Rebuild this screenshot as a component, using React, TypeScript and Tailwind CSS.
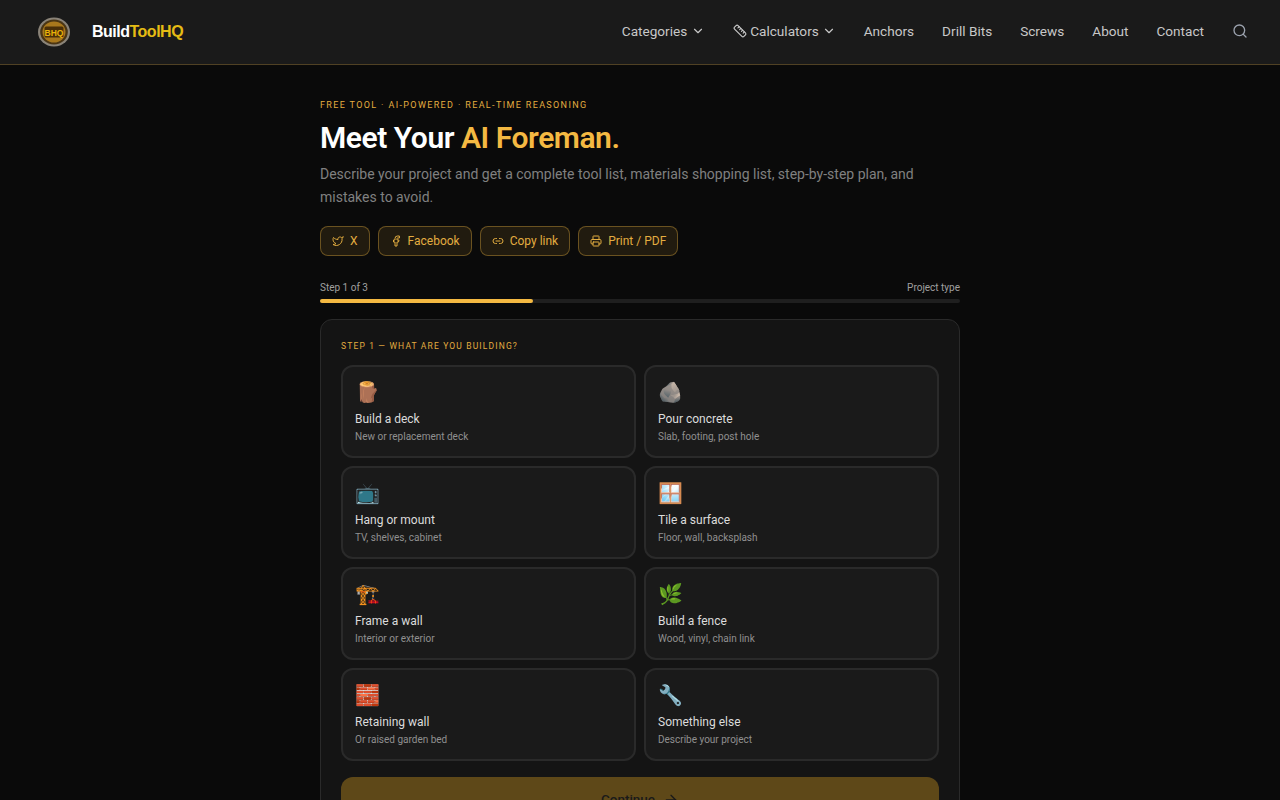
import { ChevronDown, Search, Ruler, Twitter, Facebook, Link2, Printer, ArrowRight } from "lucide-react";

const font = "[font-family:'Roboto',sans-serif]";

const items = [
  ["🪵", "Build a deck", "New or replacement deck"],
  ["🪨", "Pour concrete", "Slab, footing, post hole"],
  ["📺", "Hang or mount", "TV, shelves, cabinet"],
  ["🪟", "Tile a surface", "Floor, wall, backsplash"],
  ["🏗️", "Frame a wall", "Interior or exterior"],
  ["🌿", "Build a fence", "Wood, vinyl, chain link"],
  ["🧱", "Retaining wall", "Or raised garden bed"],
  ["🔧", "Something else", "Describe your project"],
];

function Logo() {
  return (
    <svg width="34" height="30" viewBox="0 0 34 30">
      <ellipse cx="17" cy="15" rx="16" ry="14.5" fill="#8a8378" />
      <ellipse cx="17" cy="15" rx="13.8" ry="12.5" fill="#4a3514" />
      <ellipse cx="17" cy="15" rx="11.5" ry="10.5" fill="#a9781c" />
      <rect x="7.5" y="9.5" width="19" height="11" rx="1.5" fill="#4a2f08" />
      <text x="17" y="18.5" textAnchor="middle" fontSize="8.5" fontWeight="700" fill="#eab308" fontFamily="Liberation Sans">BHQ</text>
    </svg>
  );
}

function Share({ icon, label }: { icon: React.ReactNode; label: string }) {
  return (
    <a className="flex h-[30px] items-center gap-[6px] rounded-lg border border-[#f4b94259] bg-[#f4b9421a] px-[11px] text-xs text-[#e3ad40]">
      {icon}
      {label}
    </a>
  );
}

export default function App() {
  return (
    <div className={`min-h-screen bg-[#0a0a0a] ${font}`}>
      <header className="flex h-[65px] items-center justify-between border-b border-[#f4b94240] bg-[#1a1a1a] pr-[32px] pl-[37px]">
        <div className="flex items-center gap-[21px]">
          <Logo />
          <div className="text-[16px] font-bold tracking-[-0.5px] text-white [font-family:'Liberation_Sans',sans-serif]">
            Build<span className="text-[#e5bc14]">ToolHQ</span>
          </div>
        </div>
        <nav className="-mt-px flex items-center gap-7 text-[13.6px] text-[#c8c8c8]">
          <span className="flex items-center gap-[4px]">Categories <ChevronDown size={14} /></span>
          <span className="flex items-center gap-[3px]"><Ruler size={14} />Calculators <ChevronDown size={14} /></span>
          <span>Anchors</span>
          <span>Drill Bits</span>
          <span>Screws</span>
          <span>About</span>
          <span>Contact</span>
          <Search size={16} className="text-[#9ca3af]" />
        </nav>
      </header>
      <main className="mx-auto w-[640px] pt-[34px]">
        <p className="text-[9px] leading-[12px] tracking-[1.36px] text-[#e3ad40] uppercase">Free tool · AI-powered · Real-time reasoning</p>
        <h1 className="mt-[9px] text-[30px] leading-[36px] font-semibold tracking-[-0.45px] text-white">
          Meet Your <span className="text-[#f4b942]">AI Foreman.</span>
        </h1>
        <p className="mt-[7px] text-sm leading-[23px] text-[#808080]">
          Describe your project and get a complete tool list, materials shopping list, step-by-step plan, and mistakes to avoid.
        </p>
        <div className="mt-[17px] flex gap-2">
          <Share icon={<Twitter size={12} />} label="X" />
          <Share icon={<Facebook size={12} />} label="Facebook" />
          <Share icon={<Link2 size={12} />} label="Copy link" />
          <Share icon={<Printer size={12} />} label="Print / PDF" />
        </div>
        <div className="mt-[26px] flex justify-between text-[10px] leading-[12px] text-[#a0a0a0]">
          <span>Step 1 of 3</span>
          <span>Project type</span>
        </div>
        <div className="mt-[5px] h-1 rounded-full bg-[#1f1f1f]">
          <div className="h-1 w-1/3 rounded-full bg-[#f4b942]" />
        </div>
        <section className="mt-4 rounded-xl border border-[#2a2a2a] bg-[#141414] p-5">
          <h2 className="text-[8.5px] leading-[12px] tracking-[1.15px] text-[#e3ad40] uppercase">Step 1 — What are you building?</h2>
          <div className="mt-[13px] grid grid-cols-2 gap-2">
            {items.map(([e, t, s]) => (
              <button key={t} className="flex h-[93px] flex-col items-start rounded-xl border-2 border-[#2a2a2a] bg-[#1a1a1a] px-3 pt-[11px] text-left">
                <span className="text-xl leading-[28px] [font-family:'Noto_Color_Emoji',sans-serif]">{e}</span>
                <span className="mt-[5px] text-xs leading-[16px] text-[#dcdcdc]">{t}</span>
                <span className="mt-[3px] text-[10px] leading-[14px] text-[#909090]">{s}</span>
              </button>
            ))}
          </div>
          <button className="mt-4 flex h-11 w-full items-center justify-center gap-2 rounded-xl bg-[#5e4818] pt-px text-[13.5px] font-medium text-[#1a1a1a]">
            Continue <ArrowRight size={16} />
          </button>
        </section>
      </main>
    </div>
  );
}
